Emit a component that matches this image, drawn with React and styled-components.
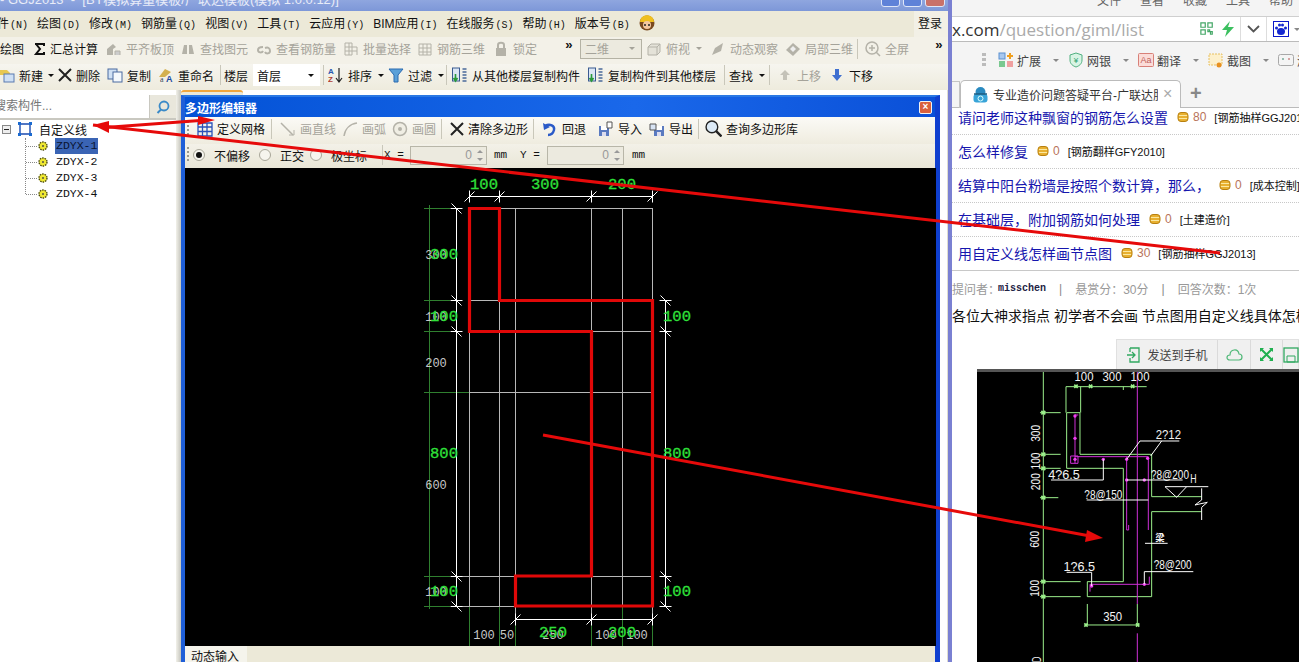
import React from "react";
import styled, { createGlobalStyle } from "styled-components";

const CJK = `"Liberation Sans", "Noto Sans CJK SC", sans-serif`;
const MONO = `"Liberation Mono", "Noto Sans CJK SC", monospace`;

const Global = createGlobalStyle`
  html, body { margin: 0; padding: 0; background: #fff; overflow: hidden; }
  * { box-sizing: border-box; }
`;

const Screen = styled.div`
  position: relative;
  display: flex;
  width: 1299px;
  height: 662px;
  overflow: hidden;
  font-family: ${CJK};
  font-size: 12px;
  color: #111;
`;

/* ---------- left: desktop app ---------- */
const AppWindow = styled.div`
  display: flex;
  flex-direction: column;
  flex: none;
  width: 952px;
  height: 662px;
  border-right: 4px solid #7a80d2;
  background: #fff;
`;

const TitleBar = styled.div`
  position: relative;
  display: flex;
  justify-content: flex-end;
  gap: 3px;
  flex: none;
  height: 11px;
  padding-right: 3px;
  overflow: hidden;
  background: linear-gradient(#8fa6df, #7d97d8);
`;

const TitleText = styled.div`
  position: absolute;
  left: 0;
  top: -11px;
  color: #e8ecf8;
  font-size: 13px;
  white-space: pre;
`;

const WinButton = styled.div`
  width: ${(p) => p.$w}px;
  height: 8px;
  margin-top: -1px;
  border: 1px solid #dfe6f8;
  border-radius: 0 0 3px 3px;
  background: ${(p) => (p.$close ? "#c9716a" : "#5f82d8")};
`;

const MenuBar = styled.div`
  display: flex;
  align-items: center;
  gap: 9px;
  flex: none;
  height: 26px;
  padding-bottom: 4px;
  background: #ece9d8;
`;

const MenuItem = styled.span`
  white-space: nowrap;
  margin-left: ${(p) => p.$ml || 0}px;
  small {
    font-family: ${MONO};
    font-size: 10px;
    margin-left: 1px;
  }
`;

const Login = styled.div`
  display: flex;
  align-items: center;
  align-self: flex-start;
  height: 26px;
  margin-left: auto;
  padding: 0 6px 4px 4px;
  background: #f2f0e6;
`;

const ToolBar = styled.div`
  display: flex;
  align-items: center;
  flex: none;
  height: ${(p) => p.$h}px;
  padding-left: ${(p) => p.$pl || 0}px;
  padding-bottom: ${(p) => p.$pb || 0}px;
  white-space: nowrap;
  background: ${(p) => p.$bg};
`;

const Tool = styled.div`
  display: flex;
  align-items: center;
  flex: none;
  gap: ${(p) => (p.$gap === undefined ? 4 : p.$gap)}px;
  width: ${(p) => p.$w}px;
  color: ${(p) => (p.$off ? "#a5a39a" : "#111")};
  svg { flex: none; }
`;

const Caret = styled.i`
  display: inline-block;
  width: 0;
  height: 0;
  margin-left: ${(p) => p.$ml || 2}px;
  border-left: 3px solid transparent;
  border-right: 3px solid transparent;
  border-top: 3px solid ${(p) => (p.$off ? "#a5a39a" : p.$soft ? "#888" : "#111")};
`;

const Sep = styled.span`
  flex: none;
  width: 1px;
  height: 20px;
  margin-right: ${(p) => p.$mr}px;
  background: #c9c7ba;
`;

const Chevrons = styled.b`
  flex: none;
  width: ${(p) => p.$w}px;
  font: bold 13px/12px ${MONO};
  letter-spacing: -3px;
  margin-top: -6px;
`;

const Combo = styled.div`
  display: flex;
  align-items: center;
  justify-content: space-between;
  flex: none;
  width: ${(p) => p.$w}px;
  height: ${(p) => p.$h}px;
  margin-right: ${(p) => p.$mr || 0}px;
  padding: 0 6px 0 4px;
  background: ${(p) => p.$bg};
  border: ${(p) => (p.$line ? "1px solid #b4b2a4" : "none")};
  color: ${(p) => (p.$off ? "#a5a39a" : "#111")};
`;

const Workspace = styled.div`
  display: flex;
  flex: 1;
  min-height: 0;
`;

const LeftPanel = styled.div`
  flex: none;
  width: 176px;
  padding-top: 5px;
  background: #fff;
`;

const SearchRow = styled.div`
  display: flex;
  height: 25px;
  background: #e9e7dc;
  border-bottom: 2px solid #c9c8c0;
`;

const SearchInput = styled.div`
  flex: none;
  width: 150px;
  padding-top: 1px;
  text-indent: -6px;
  color: #777;
  background: #fff;
  border-right: 1px solid #c9c8c0;
  white-space: nowrap;
  overflow: hidden;
`;

const SearchBtn = styled.div`
  display: flex;
  align-items: center;
  justify-content: center;
  flex: 1;
`;

const Tree = styled.div`
  padding-top: 1px;
`;

const TreeRoot = styled.div`
  display: flex;
  align-items: center;
  height: 16px;
  padding-left: 2px;
  gap: 6px;
`;

const Expander = styled.span`
  display: flex;
  align-items: center;
  justify-content: center;
  width: 9px;
  height: 9px;
  border: 1px solid #888;
  background: #eee;
  &::after {
    content: "";
    width: 5px;
    height: 1px;
    background: #222;
  }
`;

const TreeList = styled.div`
  position: relative;
  margin-top: 1px;
  &::before {
    content: "";
    position: absolute;
    left: 25px;
    top: 0;
    height: 56px;
    border-left: 1px dotted #888;
  }
`;

const TreeRow = styled.div`
  position: relative;
  display: flex;
  align-items: center;
  gap: 7px;
  height: 16px;
  padding-left: 38px;
  font: 11.5px ${MONO};
  &::before {
    content: "";
    position: absolute;
    left: 26px;
    top: 8px;
    width: 11px;
    border-top: 1px dotted #888;
  }
`;

const TreeLabel = styled.span`
  width: 43px;
  height: 16px;
  line-height: 16px;
  padding-left: 1px;
  overflow: hidden;
  background: ${(p) => (p.$on ? "#3a64b4" : "transparent")};
  color: ${(p) => (p.$on ? "#0b1430" : "#111")};
`;

const Splitter = styled.div`
  flex: none;
  width: 5px;
  background: linear-gradient(90deg, #f2f1ea, #c4c4bc);
`;

const EditorArea = styled.div`
  flex: none;
  width: 767px;
  padding-right: 7px;
  background: #fff;
  border-right: 1px solid #dedcd0;
`;

const HiddenTab = styled.div`
  width: 62px;
  height: 5px;
  border-top: 2px solid #f0a63c;
  border-radius: 3px 3px 0 0;
  background: #ece9d8;
`;

const Dialog = styled.div`
  border-left: 4px solid #1f5fd8;
  border-right: 5px solid #0f3fcf;
  border-top: 2px solid #2a78e4;
  height: 567px;
  background: #ece9d8;
`;

const DialogTitle = styled.div`
  display: flex;
  align-items: center;
  justify-content: space-between;
  height: 20px;
  padding: 0 3px 0 0;
  color: #fff;
  font-weight: bold;
  background: linear-gradient(90deg, #0352d6, #1a68ea 60%, #0a50d8);
`;

const CloseBox = styled.div`
  display: flex;
  align-items: center;
  justify-content: center;
  width: 13px;
  height: 13px;
  border: 1px solid #f2f2f2;
  border-radius: 2px;
  background: #d9603e;
  font: bold 10px/10px ${CJK};
`;

const Grip = styled.span`
  flex: none;
  width: 2px;
  height: 16px;
  margin: 0 ${(p) => p.$mr}px 0 2px;
  background: repeating-linear-gradient(#9a988c 0 2px, transparent 2px 4px);
`;

const Radio = styled.span`
  display: flex;
  align-items: center;
  justify-content: center;
  flex: none;
  width: 12px;
  height: 12px;
  margin-right: 5px;
  border: 1px solid #a8a698;
  border-radius: 50%;
  background: #f6f5ee;
  &::after {
    content: "";
    width: 6px;
    height: 6px;
    border-radius: 50%;
    background: ${(p) => (p.$on ? "#111" : "transparent")};
  }
`;

const MonoLabel = styled.span`
  flex: none;
  width: ${(p) => p.$w}px;
  font: 11px ${MONO};
  white-space: pre;
`;

const Spin = styled.div`
  display: flex;
  align-items: center;
  justify-content: flex-end;
  flex: none;
  width: 77px;
  height: 19px;
  margin-right: ${(p) => p.$mr}px;
  padding-right: 3px;
  gap: 5px;
  color: #999;
  border: 1px solid #b8b6a8;
  background: #eceadf;
`;

const SpinArrows = styled.span`
  display: flex;
  flex-direction: column;
  gap: 5px;
  i {
    width: 0;
    height: 0;
    border-left: 3px solid transparent;
    border-right: 3px solid transparent;
  }
  i:first-child { border-bottom: 3px solid #999; }
  i:last-child { border-top: 3px solid #999; }
`;

const Canvas = styled.svg`
  display: block;
  width: 751px;
  height: 478px;
  background: #000;
`;

const BottomBar = styled.div`
  height: 16px;
  background: #ece9d8;
`;

const BottomTab = styled.div`
  width: 62px;
  height: 16px;
  padding: 1px 0 0 6px;
  background: #f5f4ec;
`;

/* ---------- right: browser ---------- */
const Browser = styled.div`
  display: flex;
  flex-direction: column;
  flex: 1;
  min-width: 0;
  overflow: hidden;
  background: #fff;
`;

const BrowserMenu = styled.div`
  display: flex;
  gap: 19px;
  flex: none;
  height: 16px;
  padding-left: 145px;
  overflow: hidden;
  background: #f4f4f4;
  color: #666;
  span { margin-top: -9px; }
`;

const AddressBar = styled.div`
  display: flex;
  align-items: center;
  flex: none;
  height: 26px;
  border-top: 1px solid #cfcfcf;
  border-bottom: 1px solid #bbb;
  background: #fff;
`;

const Url = styled.div`
  flex: none;
  width: 248px;
  font: 17px "Open Sans", ${CJK};
  color: #333;
  white-space: nowrap;
  span { color: #aaa; }
`;

const AddressIcons = styled.div`
  display: flex;
  align-items: center;
  height: 24px;
  gap: ${(p) => p.$gap}px;
  padding: 0 ${(p) => p.$pr || 0}px 0 ${(p) => p.$pl || 0}px;
  border-right: ${(p) => (p.$line ? "1px solid #ddd" : "none")};
`;

const PluginBar = styled.div`
  display: flex;
  align-items: center;
  flex: none;
  height: 38px;
  padding-bottom: 2px;
  background: #f4f4f4;
  color: #444;
  white-space: nowrap;
`;

const Plugin = styled.div`
  display: flex;
  align-items: center;
  flex: none;
  gap: 3px;
  width: 70px;
  font-size: 12px;
`;

const Stripes = styled.span`
  flex: none;
  width: 4px;
  height: 14px;
  margin: 0 12px 0 ${(p) => p.$ml}px;
  background: repeating-linear-gradient(#bbb 0 3px, transparent 3px 5px);
`;

const TabStrip = styled.div`
  display: flex;
  align-items: flex-end;
  flex: none;
  height: 28px;
  background: #f4f4f4;
  border-bottom: 1px solid #bbb;
`;

const OldTab = styled.div`
  width: 8px;
  height: 27px;
  margin-bottom: -1px;
  border: 1px solid #c4c4c4;
  border-left: none;
  border-bottom: none;
`;

const ActiveTab = styled.div`
  display: flex;
  align-items: center;
  gap: 5px;
  width: 221px;
  height: 28px;
  margin-bottom: -1px;
  padding-left: 12px;
  border: 1px solid #bbb;
  border-bottom: none;
  border-radius: 5px 5px 0 0;
  background: #fff;
  color: #333;
  white-space: nowrap;
`;

const TabTitle = styled.span`
  width: 165px;
  overflow: hidden;
`;

const TabClose = styled.span`
  color: #aaa;
  font-size: 16px;
  margin-top: -1px;
`;

const NewTab = styled.span`
  margin: 0 0 3px 9px;
  color: #888;
  font: bold 20px/22px ${CJK};
`;

const Question = styled.div`
  display: flex;
  align-items: center;
  flex: none;
  height: ${(p) => p.$h}px;
  padding: 0 0 ${(p) => p.$pb}px 6px;
  white-space: nowrap;
  border-bottom: 1px ${(p) => (p.$last ? "solid #c8c8c8" : "dotted #c8c8c8")};
  & > * { flex: none; }
`;

const QLink = styled.span`
  color: #1616ae;
  font-size: 14px;
  margin-right: 9px;
`;

const Points = styled.span`
  color: #b8735a;
  margin: 0 8px 0 4px;
`;

const Tag = styled.span`
  font-size: 11px;
  color: #111;
`;

const Meta = styled.div`
  display: flex;
  align-items: center;
  flex: none;
  height: 35px;
  color: #999;
  white-space: pre;
  b {
    font: bold 10px ${MONO};
    color: #224;
    margin-left: -2px;
  }
  i {
    font-style: normal;
    margin: 0 13px;
    color: #888;
  }
`;

const Body = styled.div`
  flex: none;
  height: 33px;
  font-size: 14px;
  line-height: 20px;
  color: #111;
  white-space: nowrap;
`;

const ShareBar = styled.div`
  display: flex;
  align-items: stretch;
  flex: none;
  width: 183px;
  height: 30px;
  margin: 0 0 0 164px;
  background: #f0f0f0;
  border: 1px solid #e0e0e0;
  border-bottom: none;
  color: #444;
`;

const ShareCell = styled.div`
  display: flex;
  align-items: center;
  justify-content: center;
  flex: none;
  gap: 5px;
  width: ${(p) => p.$w}px;
  border-right: 1px solid #dadada;
`;

const Drawing = styled.svg`
  display: block;
  flex: none;
  width: 322px;
  height: 293px;
  margin-left: 25px;
  background: #000;
  border-top: 3px solid #555;
`;

const Overlay = styled.svg`
  position: absolute;
  left: 0;
  top: 0;
  width: 1299px;
  height: 662px;
  pointer-events: none;
`;

/* ---------- icons ---------- */
const I = ({ s = 16, w, children }) => (
  <svg width={w || s} height={s} viewBox="0 0 16 16" fill="none">{children}</svg>
);
const GR = "#b4b2a8";

const Icons = {
  sigma: () => <svg width="14" height="14" viewBox="0 0 14 14"><path d="M2 2h9v2M3 2l4 5-4 5h8v-2" fill="none" stroke="#111" strokeWidth="2" /></svg>,
  align: () => <I><path d="M1 14V8l6-5 3 3-3 2v6z" fill={GR} /><path d="M9 14v-4h5v4" fill="#ccc" stroke={GR} /></I>,
  binoc: () => <I><path d="M2 13l2-9h3v9zM9 13V4h3l2 9z" fill={GR} /></I>,
  loop: () => <I><path d="M2 9c0-3 3-3 5-3M9 7c3-1 5 0 5 3s-4 3-5 1M2 9c0 3 4 3 5 1" stroke={GR} strokeWidth="2" /></I>,
  batch: () => <I><path d="M2 2h7v12H2zM2 6h12M2 10h12M6 2v12M14 6v8" stroke={GR} /></I>,
  grid3d: () => <I><path d="M2 3h12v11H2zM2 7h12M2 11h12M6 3v11M10 3v11" stroke={GR} /></I>,
  lock: () => <I><rect x="3" y="7" width="10" height="8" fill={GR} /><path d="M5 7V4c0-3 6-3 6 0v3" stroke={GR} strokeWidth="2" /></I>,
  cube: () => <I><path d="M2 6l3-3h9v8l-3 3H2zM2 6h9v8M11 6l3-3" stroke={GR} fill="#e4e2d8" /></I>,
  orbit: () => <I><path d="M2 14l3-7 8-5-2 8z" fill={GR} /></I>,
  local3d: () => <I><path d="M1 9l7-7 7 6-7 7z" fill={GR} /><path d="M5 8l3-3 3 3-3 3z" fill="#eee" /></I>,
  zoom: () => <I><circle cx="7" cy="7" r="6" stroke={GR} strokeWidth="1.5" /><path d="M4 7h6M7 4v6M11 11l4 4" stroke={GR} strokeWidth="1.5" /></I>,
  newDoc: () => <I><path d="M-2 3h9l3 3v2H-2z" fill="#e8c850" /><rect x="4" y="7" width="10" height="8" fill="#cfe0f4" stroke="#5a7ab0" /></I>,
  cross: () => <I><path d="M2 2l12 12M14 2L2 14" stroke="#222" strokeWidth="2" /></I>,
  copy: () => <I><rect x="1" y="2" width="9" height="10" fill="#cfe0f4" stroke="#4a6aa0" /><rect x="6" y="5" width="9" height="10" fill="#f4f8fc" stroke="#4a6aa0" /></I>,
  rename: () => <I><path d="M1 10l6-8 6 3-6 5z" fill="#d4b050" /><text x="2" y="15" fontSize="8" fill="#345" fontFamily="Liberation Serif">a</text><text x="8" y="15" fontSize="9" fontWeight="bold" fill="#1a4aa0" fontFamily="Liberation Sans">A</text></I>,
  sort: () => <I><text x="0" y="7" fontSize="8" fontWeight="bold" fill="#2a5ab0" fontFamily="Liberation Sans">A</text><text x="0" y="15" fontSize="8" fontWeight="bold" fill="#b04030" fontFamily="Liberation Sans">Z</text><path d="M11 1v13M8 11l3 4 3-4" stroke="#222" strokeWidth="1.2" /></I>,
  filter: () => <I><path d="M1 2h14l-5 6v7H6V8z" fill="#5aa0d8" stroke="#2a6ab0" /></I>,
  fromFloor: () => <I s={16} w={17}><rect x="1" y="1" width="7" height="13" fill="#dbe6f4" stroke="#3a5a90" /><path d="M4 7v6M2 11l2 3 2-3" stroke="#2a9a3a" strokeWidth="1.6" /><path d="M11 2h4M11 5h4M11 8h4M11 11h4M11 14h4" stroke="#4a6a9a" strokeWidth="1.4" /></I>,
  up: () => <I><path d="M8 3l5 5h-3v5H6V8H3z" fill="#c4c2b8" /></I>,
  down: () => <I><path d="M6 2h4v6h3l-5 6-5-6h3z" fill="#3f6fd0" /></I>,
  mesh: () => <I><path d="M1 2h14v13H1zM1 6h14M1 10.500h14M5.500 2v13M10 2v13" stroke="#2a52b8" strokeWidth="1.3" /></I>,
  line: () => <I><path d="M1 2l12 12" stroke={GR} strokeWidth="1.5" /><path d="M9 14h5V9" stroke={GR} /></I>,
  arc: () => <I><path d="M2 15C3 8 8 3 15 2" stroke={GR} strokeWidth="1.5" /></I>,
  circle: () => <I><circle cx="8" cy="8" r="6.500" stroke={GR} strokeWidth="1.5" fill="#f0eee4" /><circle cx="8" cy="8" r="2" fill={GR} /></I>,
  undo: () => <I><path d="M3 5c5-3 10 0 9 4s-4 5-6 5" stroke="#2a5ac8" strokeWidth="2.400" /><path d="M1 2l1 7 6-3z" fill="#2a5ac8" /></I>,
  floppyIn: () => <I><path d="M1 5h10v10H1z" fill="#5a7ac0" /><path d="M3 5h6v4H3z" fill="#fff" /><path d="M4 11h4v4H4z" fill="#dde" /><path d="M9 1h5v6H9z" fill="#fff" stroke="#555" /></I>,
  floppyOut: () => <I><path d="M5 5h10v10H5z" fill="#5a7ac0" /><path d="M7 5h6v4H7z" fill="#fff" /><path d="M8 11h4v4H8z" fill="#dde" /><path d="M1 3h6v6H1z" fill="#d8e4f4" stroke="#555" /></I>,
  lens: () => <I s={17}><circle cx="6.500" cy="6.500" r="5.500" stroke="#222" fill="#dceaf6" strokeWidth="1.3" /><path d="M10.500 10.500l5 5" stroke="#222" strokeWidth="2.200" /></I>,
  nodes: () => <I><path d="M3 3h10v10H3z" stroke="#1a4ab0" strokeWidth="1.4" /><path d="M1 1h3v3H1zM12 1h3v3h-3zM1 12h3v3H1zM12 12h3v3h-3z" fill="#1a6ad0" /></I>,
  gear: () => <svg width="10" height="10" viewBox="0 0 10 10"><circle cx="5" cy="5" r="4" fill="#efe832" stroke="#4a4a10" strokeWidth="1.400" strokeDasharray="1.500 1" /><circle cx="5" cy="5" r="1" fill="#554" /></svg>,
  search: () => <svg width="14" height="14" viewBox="0 0 14 14" fill="none"><circle cx="8" cy="6" r="4.500" stroke="#3a8ac8" strokeWidth="1.800" /><path d="M5 9.500L1.500 13" stroke="#3a8ac8" strokeWidth="2" /></svg>,
  worker: () => <svg width="16" height="17" viewBox="0 0 16 17"><circle cx="8" cy="9" r="7.500" fill="#7a4a20" /><path d="M1 8c0-9 14-9 14 0z" fill="#f0c020" /><circle cx="8" cy="11" r="4" fill="#f4c8a0" /><circle cx="6" cy="11" r="1" fill="#222" /><circle cx="10" cy="11" r="1" fill="#222" /></svg>,
  coin: () => <svg width="12" height="10" viewBox="0 0 12 10"><rect x="1" y="0.500" width="10" height="9" rx="3" fill="#e8b030" stroke="#b88010" /><path d="M2 3.500h8M2 6.500h8" stroke="#fbe8a0" /></svg>,
  qr: () => <I s={14}><path d="M1 1h5v5H1zM9 1h5v5H9zM1 9h5v5H1zM9 9h2v2H9zM12 11h2v3h-2z" stroke="#46a868" strokeWidth="1.400" /></I>,
  bolt: () => <svg width="12" height="16" viewBox="0 0 12 16"><path d="M8 0L0 9h5l-2 7 9-10H6z" fill="#3cc060" /></svg>,
  chev: () => <svg width="13" height="8" viewBox="0 0 13 8" fill="none"><path d="M1 1l5.500 5.500L12 1" stroke="#555" strokeWidth="1.800" /></svg>,
  paw: () => <svg width="16" height="16" viewBox="0 0 16 16"><rect width="16" height="16" fill="#0c18c8" /><rect x="1" y="1" width="14" height="14" fill="#fff" /><ellipse cx="8" cy="10.500" rx="4" ry="3.500" fill="#1428d0" /><circle cx="3.500" cy="7" r="1.500" fill="#1428d0" /><circle cx="6.500" cy="4" r="1.500" fill="#1428d0" /><circle cx="9.500" cy="4" r="1.500" fill="#1428d0" /><circle cx="12.500" cy="7" r="1.500" fill="#1428d0" /></svg>,
  ext: () => <I><rect x="1" y="1" width="6" height="6" fill="#a8c8f0" stroke="#5a90d0" /><rect x="1" y="9" width="6" height="6" fill="#7ac890" /><rect x="9" y="9" width="6" height="6" fill="#f0a0a0" /><path d="M12 1v6M9 4h6" stroke="#f0a020" strokeWidth="2" /></I>,
  bank: () => <I><path d="M8 1l6 2v5c0 4-3 6-6 7-3-1-6-3-6-7V3z" fill="#d8f4e4" stroke="#50b080" /><text x="8" y="11" textAnchor="middle" fontSize="8" fill="#30a070" fontFamily="Liberation Sans">¥</text></I>,
  trans: () => <I><rect x="0.500" y="1.500" width="15" height="13" rx="1" fill="#fbdcd8" stroke="#d88078" /><text x="8" y="11" textAnchor="middle" fontSize="9" fill="#c06058" fontFamily="Liberation Sans">Aa</text></I>,
  shot: () => <I><rect x="1" y="2" width="13" height="11" fill="#fdf0cc" stroke="#e8c060" strokeDasharray="2 1" /><circle cx="11" cy="13" r="2.500" fill="#e89020" /></I>,
  game: () => <I><rect x="0.500" y="2.500" width="15" height="11" rx="2" fill="#f4f4f4" stroke="#a8a8a8" /><circle cx="5" cy="7" r="1" fill="#7a9" /><circle cx="11" cy="7" r="1" fill="#c88" /></I>,
  ie: () => <svg width="15" height="16" viewBox="0 0 15 16"><circle cx="7.500" cy="5" r="5" fill="#2a8ac0" /><rect x="0.500" y="7" width="14" height="8.500" rx="3" fill="#38a4d8" /><path d="M1 7h13" stroke="#1a5a80" strokeWidth="1.500" /><circle cx="7.500" cy="11.500" r="2.500" fill="none" stroke="#dff" /></svg>,
  send: () => <I><path d="M4 1h9v14H4v-4M4 5V1M1 8h8M6 5l3 3-3 3" stroke="#30a860" strokeWidth="1.300" /></I>,
  cloud: () => <svg width="17" height="13" viewBox="0 0 17 13" fill="none"><path d="M4 12C0 12 0 7 4 7c0-6 8-7 9-1 4 0 4 6 0 6z" stroke="#50b878" strokeWidth="1.200" /></svg>,
  expand: () => <svg width="13" height="13" viewBox="0 0 13 13"><path d="M1 1l11 11M12 1L1 12" stroke="#20b050" strokeWidth="2" /><path d="M0 0h4L0 4zM13 0H9l4 4zM0 13h4l-4-4zM13 13H9l4-4z" fill="#20b050" /></svg>,
  save: () => <I><rect x="1" y="1" width="14" height="14" fill="none" stroke="#30a860" strokeWidth="1.300" /><path d="M4 9h8v6H4z" stroke="#30a860" fill="none" /></I>,
};

/* ---------- data ---------- */
const MENUS = [
  ["绘图", "(D)"], ["修改", "(M)"], ["钢筋量", "(Q)"], ["视图", "(V)"], ["工具", "(T)"],
  ["云应用", "(Y)"], ["BIM应用", "(I)"], ["在线服务", "(S)"], ["帮助", "(H)"], ["版本号", "(B)"],
];

const TOOLS_A = [
  { w: 73, icon: "sigma", label: "汇总计算", gap: 3 },
  { w: 74, icon: "align", label: "平齐板顶", off: true },
  { w: 76, icon: "binoc", label: "查找图元", off: true },
  { w: 87, icon: "loop", label: "查看钢筋量", off: true },
  { w: 74, icon: "batch", label: "批量选择", off: true },
  { w: 76, icon: "grid3d", label: "钢筋三维", off: true },
  { w: 72, icon: "lock", label: "锁定", off: true },
];
const TOOLS_B = [
  { w: 64, icon: "cube", label: "俯视", off: true, caret: true },
  { w: 75, icon: "orbit", label: "动态观察", off: true },
  { w: 72, icon: "local3d", label: "局部三维", off: true },
];
const TOOLS_C = [
  { w: 57, icon: "newDoc", label: "新建", caret: true, gap: 3 },
  { w: 50, icon: "cross", label: "删除", gap: 3 },
  { w: 51, icon: "copy", label: "复制" },
  { w: 62, icon: "rename", label: "重命名" },
];
const TOOLS_D = [
  { w: 60, icon: "sort", label: "排序", caret: true },
  { w: 58, icon: "filter", label: "过滤", caret: true },
];
const TOOLS_E = [
  { w: 136, icon: "fromFloor", label: "从其他楼层复制构件" },
  { w: 137, icon: "fromFloor", label: "复制构件到其他楼层" },
];

const DLG_A = [{ w: 74, icon: "mesh", label: "定义网格" }];
const DLG_B = [
  { w: 62, icon: "line", label: "画直线", off: true },
  { w: 50, icon: "arc", label: "画弧", off: true },
  { w: 49, icon: "circle", label: "画圆", off: true },
];
const DLG_C = [
  { w: 56, icon: "undo", label: "回退" },
  { w: 51, icon: "floppyIn", label: "导入" },
  { w: 49, icon: "floppyOut", label: "导出" },
];

const QUESTIONS = [
  { h: 27, pb: 8, title: "请问老师这种飘窗的钢筋怎么设置", pts: 80, tag: "[钢筋抽样GGJ2013]" },
  { h: 34, pb: 2, title: "怎么样修复", pts: 0, tag: "[钢筋翻样GFY2010]" },
  { h: 34, pb: 2, title: "结算中阳台粉墙是按照个数计算，那么，", pts: 0, tag: "[成本控制]" },
  { h: 34, pb: 2, title: "在基础层，附加钢筋如何处理", pts: 0, tag: "[土建造价]" },
  { h: 34, pb: 2, title: "用自定义线怎样画节点图", pts: 30, tag: "[钢筋抽样GGJ2013]", last: true },
];

const Tools = ({ items }) =>
  items.map((t) => {
    const Ico = Icons[t.icon];
    return (
      <Tool key={t.label + t.w} $w={t.w} $off={t.off} $gap={t.gap}>
        <Ico />
        <span>{t.label}</span>
        {t.caret && <Caret $off={t.off} />}
      </Tool>
    );
  });

/* ---------- polygon editor drawing, in page coordinates ---------- */
const GX = [469.5, 499.5, 515.5, 591.5, 622.5, 652.5];
const GY = [208.5, 300.5, 331.5, 392.5, 576.5, 606.5];
const SIDE_NAILS = [
  [456.5, 208.5], [456.5, 300.5], [456.5, 331.5], [456.5, 576.5], [456.5, 606.5],
  [665.5, 300.5], [665.5, 331.5], [665.5, 576.5], [665.5, 606.5],
];
const SPAN_NAILS = [
  [469.5, 196.5], [499.5, 196.5], [591.5, 196.5], [652.5, 196.5],
  [515.5, 619.5], [591.5, 619.5], [652.5, 619.5],
];
const GREEN_TEXT = [
  [484, 189, "100"], [545, 189, "300"], [622, 189, "200"],
  [444, 259, "300"], [444, 321, "100"], [444, 458, "800"], [444, 596, "100"],
  [677, 321, "100"], [677, 458, "800"], [677, 596, "100"],
  [553, 637, "250"], [622, 637, "200"],
];
const GRAY_TEXT = [
  [436, 259, "300"], [436, 321, "100"], [436, 367, "200"], [436, 489, "600"], [436, 596, "100"],
  [484, 639, "100"], [507, 639, "50"], [553, 639, "250"], [606, 639, "100"], [637, 639, "100"],
];

const EditorDrawing = () => (
  <Canvas viewBox="185 168 751 478">
    <g stroke="#2f7f2f" fill="none">
      <path d="M429.500 205V609" />
      {GY.map((y) => <path key={y} d={`M424 ${y}H${y === 392.5 ? 469 : 450}`} />)}
      {GX.map((x) => <path key={x} d={`M${x} ${x === 469.5 || x === 499.5 || x === 622.5 ? 606 : 620}V646`} />)}
    </g>
    <g stroke="#b8b8b8" fill="none">
      {GX.map((x) => <path key={x} d={`M${x} 208V${x === 469.5 || x === 499.5 || x === 622.5 ? 606 : 614}`} />)}
      {GY.map((y) => <path key={y} d={`M${y > 570 ? 462 : 469} ${y}H653`} />)}
    </g>
    <g stroke="#fff" fill="none">
      <path d="M456.500 208V606M665.500 300V606M469 196.500H653M515 619.500H653" />
      {SIDE_NAILS.map(([x, y]) => <path key={`${x}-${y}`} d={`M${x - 5} ${y - 5}L${x + 5} ${y + 5}M${x - 6} ${y}H${x + 6}`} />)}
      {SPAN_NAILS.map(([x, y]) => <path key={`${x}-${y}`} d={`M${x - 5} ${y + 5}L${x + 5} ${y - 5}M${x} ${y - 6}V${y + 6}`} />)}
    </g>
    <g fontFamily="Liberation Mono" fontSize="12" fill="#c8c8c8" textAnchor="middle">
      {GRAY_TEXT.map(([x, y, t]) => <text key={`${x}-${y}`} x={x} y={y}>{t}</text>)}
    </g>
    <g fontFamily="Liberation Mono" fontSize="15.500" fill="#2fe03a" stroke="#2fe03a" strokeWidth="0.3" textAnchor="middle">
      {GREEN_TEXT.map(([x, y, t]) => <text key={`${x}-${y}`} x={x} y={y}>{t}</text>)}
    </g>
    <path
      d="M469.500 208.500H499.500V300.500H652.500V606H515.500V576H591.500V331.500H469.500Z"
      fill="none"
      stroke="#e00808"
      strokeWidth="3.200"
    />
  </Canvas>
);

/* ---------- the photographed cad picture, scaled so 3 units = 1px ---------- */
const DOTS = [
  [345, 48], [345, 115], [345, 178], [430, 178], [500, 178], [563, 175],
  [500, 240], [553, 240], [395, 558], [553, 553],
];
const TICKS = [38, 163, 205, 293, 545, 590];
const WHITE_TEXT = [
  [372, -58, "100"], [456, -58, "300"], [540, -58, "100"],
  [625, 118, "2?12"], [312, 236, "4?6.5"], [630, 236, "?8@200"],
  [430, 296, "?8@150"], [638, 508, "?8@200"], [358, 513, "1?6.5"], [458, 662, "350"], [700, 250, "H"],
];
const SIDE_TEXT = [[240, 100, "300"], [240, 183, "100"], [240, 245, "200"], [238, 418, "600"], [238, 565, "100"], [242, 778, "D"]];

const NodeDrawing = () => (
  <Drawing viewBox="977 372 322 290">
    <g transform="translate(960 400) scale(0.3333)" fill="none" strokeWidth="3">
      <g stroke="#9cf08c">
        <path d="M250 -100V790M318 -40V38M362 -40V38M490 -40V-30M318 -40H560" />
        <path d="M320 38H360V163H575V290H725M575 335H725M575 335V590H382V545H490V205H320V38" />
        <path d="M382 612V675M378 675H538M532 612V675" />
        {TICKS.map((y) => <path key={y} d={`M240 ${y}H${y === 293 ? 295 : y === 545 || y === 590 ? 362 : 302}`} />)}
      </g>
      <g stroke="#9cf08c" strokeWidth="5">
        {TICKS.map((y) => <path key={y} d={`M244 ${y - 5}l12 10M256 ${y - 5}l-12 10`} />)}
        <path d="M343 -46l10 10M353 -46l-10 10M387 -46l10 10M397 -46l-10 10M513 -46l10 10M523 -46l-10 10M373 670l10 10M383 670l-10 10M528 670l10 10M538 670l-10 10" />
      </g>
      <g stroke="#d030d8">
        <path d="M532 -90V612M532 700V790" />
        <path d="M345 45V190M332 168h22v22h-22zM345 170H565M500 170V390H506V375M565 170V390" />
        <path d="M390 575V553H568V530M396 553V560" />
        <path d="M355 45H345" />
      </g>
      <g fill="#f040f0">
        {DOTS.map(([x, y]) => <circle key={`${x}-${y}`} cx={x} cy={y} r="5" />)}
      </g>
      <g stroke="#fff">
        <path d="M273 240H430V178M540 123H658M540 123L500 178M605 123L572 168M500 240H668M380 300H565" />
        <path d="M615 260H745M615 260L650 292L680 260M725 265V300L705 315L742 307L725 322V360" />
        <path d="M555 430H623M553 515H700M553 515V553M320 517H395V558" />
      </g>
      <g fontFamily="Liberation Sans" fontSize="37" fill="#f4f4f4" textAnchor="middle">
        {WHITE_TEXT.map(([x, y, t]) => <text key={t + x} x={x} y={y} textLength={t.length * 19} lengthAdjust="spacingAndGlyphs">{t}</text>)}
        {SIDE_TEXT.map(([x, y, t]) => (
          <text key={t + y} transform={`translate(${x} ${y}) rotate(-90)`} textLength={t.length * 17} lengthAdjust="spacingAndGlyphs">{t}</text>
        ))}
        <text x="600" y="424" fontFamily="Noto Sans CJK SC" fontSize="28" fontWeight="bold">梁</text>
      </g>
    </g>
  </Drawing>
);

export default function App() {
  return (
    <Screen>
      <Global />
      <AppWindow>
        <TitleBar>
          <TitleText>{"- GGJ2013  -  [BY模拟算量模板/广联达模板(模拟 1.0.0.12)]"}</TitleText>
          <WinButton $w={19} />
          <WinButton $w={19} />
          <WinButton $w={20} $close />
        </TitleBar>

        <MenuBar>
          <MenuItem $ml={-3}>件<small>(N)</small></MenuItem>
          {MENUS.map(([a, b]) => (
            <MenuItem key={a}>{a}<small>{b}</small></MenuItem>
          ))}
          <Icons.worker />
          <Login>登录</Login>
        </MenuBar>

        <ToolBar $h={27} $pb={4} $bg="#f3f1e8">
          <Tool $w={33}><span>绘图</span></Tool>
          <Tools items={TOOLS_A} />
          <Chevrons $w={15}>»</Chevrons>
          <Combo $w={62} $h={20} $mr={4} $bg="#eceadf" $line $off>
            <span>二维</span>
            <Caret $off />
          </Combo>
          <Tools items={TOOLS_B} />
          <Sep $mr={7} />
          <Tool $w={70} $off><Icons.zoom /><span>全屏</span></Tool>
          <Chevrons $w={12}>»</Chevrons>
        </ToolBar>

        <ToolBar $h={26} $pb={4} $bg="linear-gradient(#f6f5ef, #eeebdd)">
          <Tools items={TOOLS_C} />
          <Sep $mr={3} />
          <Tool $w={29}><span>楼层</span></Tool>
          <Combo $w={67} $h={22} $mr={3} $bg="#fff">
            <span>首层</span>
            <Caret />
          </Combo>
          <Sep $mr={4} />
          <Tools items={TOOLS_D} />
          <Sep $mr={4} />
          <Tools items={TOOLS_E} />
          <Sep $mr={4} />
          <Tool $w={40}><span>查找</span><Caret /></Tool>
          <Sep $mr={7} />
          <Tool $w={52} $off><Icons.up /><span>上移</span></Tool>
          <Tool $w={60}><Icons.down /><span>下移</span></Tool>
        </ToolBar>

        <Workspace>
          <LeftPanel>
            <SearchRow>
              <SearchInput>搜索构件...</SearchInput>
              <SearchBtn><Icons.search /></SearchBtn>
            </SearchRow>
            <Tree>
              <TreeRoot>
                <Expander />
                <Icons.nodes />
                <span>自定义线</span>
              </TreeRoot>
              <TreeList>
                {["ZDYX-1", "ZDYX-2", "ZDYX-3", "ZDYX-4"].map((n, i) => (
                  <TreeRow key={n}>
                    <Icons.gear />
                    <TreeLabel $on={i === 0}>{n}</TreeLabel>
                  </TreeRow>
                ))}
              </TreeList>
            </Tree>
          </LeftPanel>
          <Splitter />
          <EditorArea>
            <HiddenTab />
            <Dialog>
              <DialogTitle>
                <span>多边形编辑器</span>
                <CloseBox>×</CloseBox>
              </DialogTitle>
              <ToolBar $h={27} $pb={4} $bg="linear-gradient(#fbfaf6, #efecdf)">
                <Grip $mr={8} />
                <Tools items={DLG_A} />
                <Sep $mr={8} />
                <Tools items={DLG_B} />
                <Sep $mr={7} />
                <Tool $w={84} $gap={3}><Icons.cross /><span>清除多边形</span></Tool>
                <Sep $mr={8} />
                <Tools items={DLG_C} />
                <Sep $mr={6} />
                <Tool $w={100}><Icons.lens /><span>查询多边形库</span></Tool>
              </ToolBar>
              <ToolBar $h={24} $pb={2} $bg="linear-gradient(#f3f1e8, #e9e6d7)">
                <Grip $mr={4} />
                <Tool $w={66} $gap={4}><Radio $on /><span>不偏移</span></Tool>
                <Tool $w={51} $gap={4}><Radio /><span>正交</span></Tool>
                <Tool $w={72} $gap={4}><Radio /><span>极坐标</span></Tool>
                <Sep $mr={1} />
                <MonoLabel $w={26}>X =</MonoLabel>
                <Spin $mr={7}>0<SpinArrows><i /><i /></SpinArrows></Spin>
                <MonoLabel $w={26}>mm</MonoLabel>
                <MonoLabel $w={27}>Y =</MonoLabel>
                <Spin $mr={8}>0<SpinArrows><i /><i /></SpinArrows></Spin>
                <MonoLabel $w={20}>mm</MonoLabel>
              </ToolBar>
              <EditorDrawing />
              <BottomBar>
                <BottomTab>动态输入</BottomTab>
              </BottomBar>
            </Dialog>
          </EditorArea>
        </Workspace>
      </AppWindow>

      <Browser>
        <BrowserMenu>
          <span>文件</span><span>查看</span><span>收藏</span><span>工具</span><span>帮助</span>
        </BrowserMenu>
        <AddressBar>
          <Url>x.com<span>/question/giml/list</span></Url>
          <AddressIcons $gap={8} $pr={6} $line>
            <Icons.qr />
            <Icons.bolt />
          </AddressIcons>
          <AddressIcons $gap={0} $pl={6} $pr={6} $line><Icons.chev /></AddressIcons>
          <AddressIcons $gap={3} $pl={6} $pr={6}><Icons.paw /><Caret $soft /></AddressIcons>
        </AddressBar>
        <PluginBar>
          <Stripes $ml={30} />
          {[["ext", "扩展"], ["bank", "网银"], ["trans", "翻译"], ["shot", "截图"]].map(([ic, label]) => {
            const Ico = Icons[ic];
            return (
              <Plugin key={label}>
                <Ico />
                <span>{label}</span>
                <Caret $soft $ml={9} />
              </Plugin>
            );
          })}
          <Plugin><Icons.game /><span>游戏</span></Plugin>
        </PluginBar>
        <TabStrip>
          <OldTab />
          <ActiveTab>
            <Icons.ie />
            <TabTitle>专业造价问题答疑平台-广联达服务新干线</TabTitle>
            <TabClose>×</TabClose>
          </ActiveTab>
          <NewTab>+</NewTab>
        </TabStrip>
        {QUESTIONS.map((q) => (
          <Question key={q.title} $h={q.h} $pb={q.pb} $last={q.last}>
            <QLink>{q.title}</QLink>
            <Icons.coin />
            <Points>{q.pts}</Points>
            <Tag>{q.tag}</Tag>
          </Question>
        ))}
        <Meta>
          提问者：<b>misschen</b><i>|</i>悬赏分：30分<i>|</i>回答次数：1次
        </Meta>
        <Body>各位大神求指点 初学者不会画 节点图用自定义线具体怎样画</Body>
        <ShareBar>
          <ShareCell $w={101}><Icons.send /><span>发送到手机</span></ShareCell>
          <ShareCell $w={33}><Icons.cloud /></ShareCell>
          <ShareCell $w={32}><Icons.expand /></ShareCell>
          <ShareCell $w={17}><Icons.save /></ShareCell>
        </ShareBar>
        <NodeDrawing />
      </Browser>

      <Overlay viewBox="0 0 1299 662">
        <g stroke="#e60a0a" strokeWidth="3" fill="none">
          <path d="M105 127.500L200 120.500" />
          <path d="M93 125L1220 253" />
          <path d="M543 435L1090 536" />
        </g>
        <g fill="#e60a0a">
          <path d="M93 125L109 121V133Z" />
          <path d="M215 120L198 116V125Z" />
          <path d="M1103 538L1087 530L1085 542Z" />
        </g>
      </Overlay>
    </Screen>
  );
}
